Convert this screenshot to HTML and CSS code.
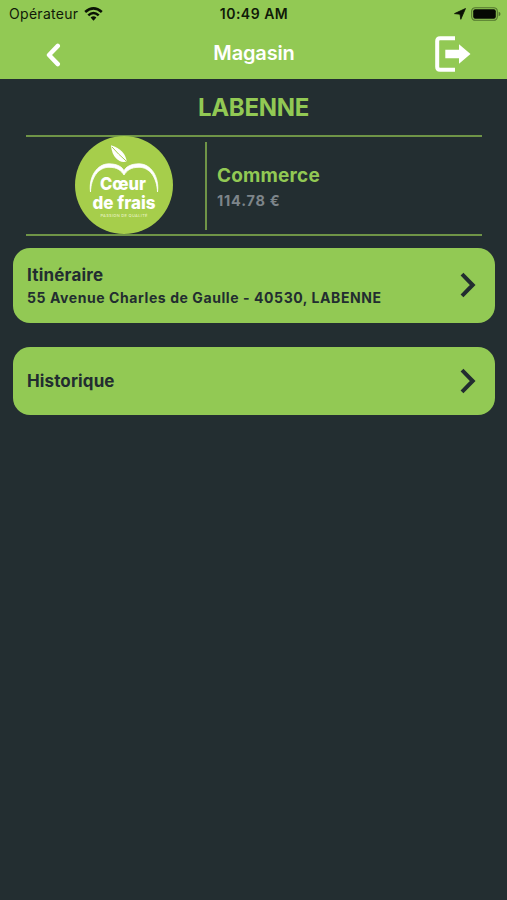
FILE: index.html
```html
<!DOCTYPE html>
<html lang="fr">
<head>
<meta charset="utf-8">
<title>Magasin</title>
<link rel="stylesheet" href="styles.css">
</head>
<body>
<header class="header">
  <div class="status">
    <div class="status-left">
      <span class="carrier">Opérateur</span>
      <svg class="wifi" viewBox="0 0 19 14" width="19" height="14" fill="none" stroke="#0b1205" stroke-width="2.6">
        <path d="M1.2 5.1Q9.5-2.2 17.8 5.1M4.3 8.4Q9.5 3.6 14.7 8.4"/>
        <path d="M6.6 10.6Q9.5 8 12.4 10.6L9.5 13.7Z" fill="#0b1205" stroke="none"/>
      </svg>
    </div>
    <span class="clock">10:49 AM</span>
    <div class="status-right">
      <svg viewBox="0 0 12 12" width="12" height="12"><path d="M11.5.5 6.8 11.3 6 6.2.5 5.6Z" fill="#0b1205" stroke="#0b1205" stroke-width=".8" stroke-linejoin="round"/></svg>
      <svg viewBox="0 0 30 14" width="30" height="14">
        <rect x=".7" y=".7" width="25.6" height="12.6" rx="3.6" fill="none" stroke="#52742e" stroke-width="1.1"/>
        <rect x="2.2" y="2.3" width="22.6" height="9.4" rx="2" fill="#050803"/>
        <path d="M27.6 4.7Q29.5 5.3 29.5 7T27.6 9.3Z" fill="#52742e"/>
      </svg>
    </div>
  </div>
  <div class="navbar">
    <svg class="back" viewBox="0 0 16 24" width="16" height="24"><path d="M12.8 2.9 4 12 12.8 21.1" fill="none" stroke="#fff" stroke-width="4.4" stroke-linecap="round" stroke-linejoin="round"/></svg>
    <h1 class="title">Magasin</h1>
    <svg class="exit" viewBox="0 0 36 36" width="36" height="36">
      <path d="M20 2.2H5Q2.2 2.2 2.2 5V31Q2.2 33.8 5 33.8H20" fill="none" stroke="#fff" stroke-width="4"/>
      <path d="M10.3 13.7H24V8.2L35.5 18 24 27.8V22.3H10.3Z" fill="#fff"/>
    </svg>
  </div>
</header>
<main>
  <h2 class="store">LABENNE</h2>
  <section class="summary">
    <div class="logo-cell">
      <svg class="logo" viewBox="0 0 98 98" width="98" height="98">
        <circle cx="49" cy="49" r="49" fill="#a6ce4b"/>
        <path d="M36 9.2Q50.5 14 51.7 25.5Q45.5 27.2 41 22.3Q36.5 17.2 36 9.2Z" fill="#fff"/>
        <path d="M37 11Q43 18 51.7 25.5" fill="none" stroke="#a6ce4b" stroke-width="1"/>
        <path d="M15.5 56C13.5 41 22 27.8 34 27.8C42 27.8 48 31 49 35.5C50 31 56 27.8 64 27.8C76 27.8 84.5 41 82.5 56C82 42 75 31.3 64 31.3C55.5 31.3 52 34.5 49 39C46 34.5 42.5 31.3 34 31.3C23 31.3 16 42 15.5 56Z" fill="#fff" stroke="#fff" stroke-width=".8"/>
        <text class="logo-name" x="25" y="54" textLength="46" lengthAdjust="spacingAndGlyphs">Cœur</text>
        <text class="logo-name" x="17.5" y="72.5" textLength="63" lengthAdjust="spacingAndGlyphs">de frais</text>
        <text class="logo-tag" x="25.5" y="81.2" textLength="47">PASSION DE QUALITÉ</text>
      </svg>
    </div>
    <div class="details">
      <div class="category">Commerce</div>
      <div class="amount">114.78 €</div>
    </div>
  </section>
  <section class="card card-route">
    <div>
      <div class="card-title">Itinéraire</div>
      <div class="address">55 Avenue Charles de Gaulle - 40530, LABENNE</div>
    </div>
    <svg class="chevron" viewBox="0 0 16 26" width="16" height="26"><path d="M2 2.2 12.7 13 2 23.8" fill="none" stroke="#222d30" stroke-width="4"/></svg>
  </section>
  <section class="card card-history">
    <div class="card-title">Historique</div>
    <svg class="chevron" viewBox="0 0 16 26" width="16" height="26"><path d="M2 2.2 12.7 13 2 23.8" fill="none" stroke="#222d30" stroke-width="4"/></svg>
  </section>
</main>
</body>
</html>
```
FILE: styles.css
```css
* { box-sizing: border-box; }
body {
  margin: 0;
  min-height: 900px;
  background: #232e31;
  color: #222d30;
  font-family: Inter, "Liberation Sans", sans-serif;
}
svg { display: block; flex: none; }
h1, h2 { margin: 0; }
.header { height: 79px; background: #92c954; }
.status {
  display: grid;
  grid-template-columns: 1fr auto 1fr;
  align-items: center;
  height: 27px;
  padding: 0 6px 0 9px;
  color: #101a08;
}
.status-left { display: flex; align-items: center; gap: 6px; }
.carrier { font-size: 14px; line-height: 20px; letter-spacing: .3px; }
.clock { font-size: 14px; font-weight: 600; line-height: 20px; letter-spacing: .5px; margin-left: -2px; }
.status-right { display: flex; align-items: center; justify-content: flex-end; gap: 5px; }
.navbar {
  display: grid;
  grid-template-columns: 1fr auto 1fr;
  align-items: center;
  height: 52px;
  padding: 0 36px 0 45px;
}
.title { color: #fff; font-size: 20px; font-weight: 600; line-height: 24px; letter-spacing: -.15px; margin: 0 0 1px -8px; }
.exit { justify-self: end; margin-top: 2px; }
.back { margin-top: 3px; }
.store {
  height: 56px;
  color: #92c954;
  font-size: 24px;
  font-weight: 700;
  line-height: 58px;
  letter-spacing: -.3px;
  text-align: center;
}
.summary {
  display: flex;
  align-items: center;
  height: 101px;
  margin: 0 25px 0 26px;
  border-top: 2px solid #6f9447;
  border-bottom: 2px solid #6f9447;
}
.logo-cell {
  display: flex;
  align-items: center;
  width: 181px;
  height: 88px;
  padding-left: 49px;
  border-right: 2px solid #6f9447;
}
.logo { margin-top: -1px; }
.logo-name { fill: #fff; font-family: Inter, sans-serif; font-size: 17.5px; font-weight: 800; }
.logo-tag { fill: #e4f0bd; font-family: Inter, sans-serif; font-size: 4px; font-weight: 500; }
.details { padding: 4px 0 0 10px; }
.category { color: #92c954; font-size: 19px; font-weight: 700; line-height: 26px; letter-spacing: .18px; }
.amount { color: #7d858a; font-size: 14.5px; font-weight: 700; line-height: 24px; letter-spacing: .78px; }
.card {
  display: flex;
  align-items: center;
  justify-content: space-between;
  margin: 0 12px 0 13px;
  padding: 0 19px 0 14px;
  border-radius: 17px;
  background: #92c954;
}
.card-route { height: 75px; margin-top: 12px; }
.card-route .chevron { margin-bottom: 2px; }
.card-history { height: 68px; margin-top: 24px; }
.card-title { font-size: 17px; font-weight: 700; line-height: 25px; letter-spacing: .12px; }
.card-route .card-title { line-height: 24px; letter-spacing: .2px; }
.address { font-size: 14px; font-weight: 700; line-height: 22px; letter-spacing: .58px; }
```
